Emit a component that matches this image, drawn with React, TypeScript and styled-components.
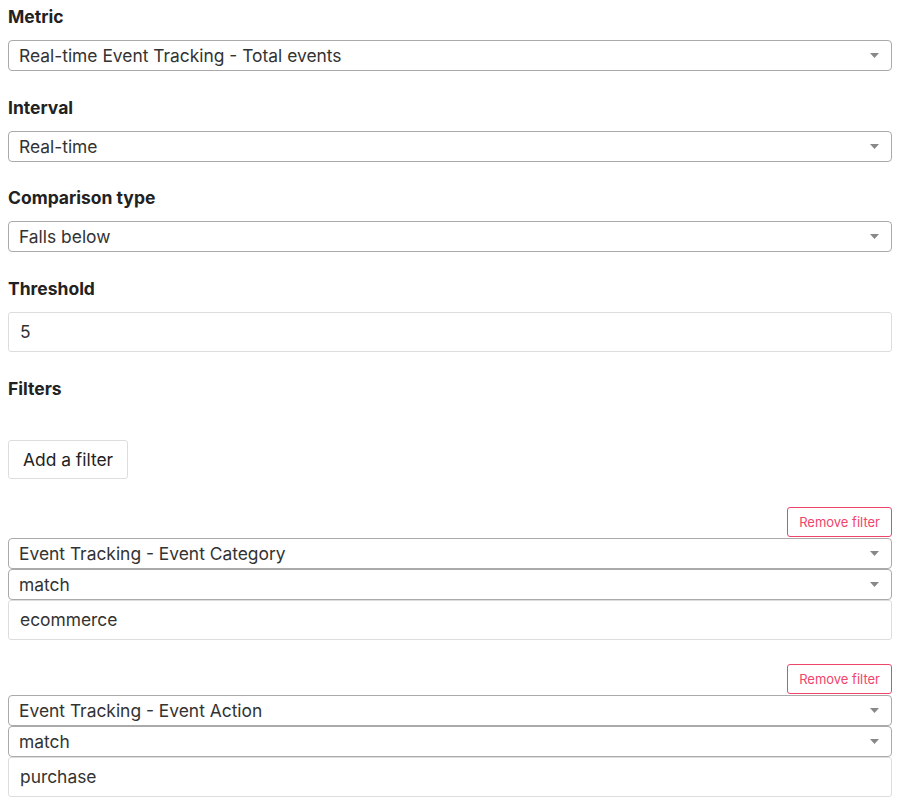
import React from 'react'
import styled, { createGlobalStyle } from 'styled-components'

const GlobalStyle = createGlobalStyle`
	body {
		margin: 8px;
		background: #fff;
		font-family: Inter, "Noto Sans", "Liberation Sans", sans-serif;
		color: #222;
	}
`

type Filter = {
	dimension: string
	operator: string
	value: string
}

const filters: Filter[] = [
	{ dimension: 'Event Tracking - Event Category', operator: 'match', value: 'ecommerce' },
	{ dimension: 'Event Tracking - Event Action', operator: 'match', value: 'purchase' },
]

const Caret = () => (
	<CaretIcon width="9" height="5" viewBox="0 0 9 5">
		<path d="M0 0h9L4.5 5z" fill="#888" />
	</CaretIcon>
)

const Select = ({ value }: { value: string }) => (
	<SelectBox>
		<span>{value}</span>
		<Caret />
	</SelectBox>
)

const App = () => {
	return (
		<>
			<GlobalStyle />
			<Form>
				<Field>
					<Label>Metric</Label>
					<Select value="Real-time Event Tracking - Total events" />
				</Field>
				<Field>
					<Label>Interval</Label>
					<Select value="Real-time" />
				</Field>
				<Field>
					<Label>Comparison type</Label>
					<Select value="Falls below" />
				</Field>
				<Field>
					<Label>Threshold</Label>
					<TextInput>5</TextInput>
				</Field>
				<Label>Filters</Label>
				<AddButton>Add a filter</AddButton>
				{filters.map((f, i) => (
					<FilterGroup key={i}>
						<RemoveRow>
							<RemoveButton>Remove filter</RemoveButton>
						</RemoveRow>
						<Select value={f.dimension} />
						<Select value={f.operator} />
						<TextInput>{f.value}</TextInput>
					</FilterGroup>
				))}
			</Form>
		</>
	)
}

const Form = styled.div`
	display: flex;
	flex-direction: column;
	width: 884px;
`

const Field = styled.div`
	display: flex;
	flex-direction: column;
	margin-bottom: 27.66px;
`

const Label = styled.div`
	font-size: 17.5px;
	font-weight: 700;
	line-height: 18px;
	margin-bottom: 14px;
	color: #222;
`

const SelectBox = styled.div`
	display: flex;
	align-items: center;
	justify-content: space-between;
	box-sizing: border-box;
	height: 31px;
	padding: 0 10px 0 10px;
	border: 1px solid #aaa;
	border-radius: 4px;
	font-size: 17.4px;
	color: #333;
	background: #fff;
`

const CaretIcon = styled.svg`
	flex-shrink: 0;
	margin-right: 2px;
`

const TextInput = styled.div`
	display: flex;
	align-items: center;
	box-sizing: border-box;
	height: 40px;
	padding: 0 11px;
	border: 1px solid #ddd;
	border-radius: 3px;
	font-size: 17.4px;
	color: #333;
`

const AddButton = styled.button`
	align-self: flex-start;
	box-sizing: border-box;
	height: 39px;
	padding: 0 14px;
	margin-top: 28px;
	border: 1px solid #ddd;
	border-radius: 3px;
	background: #fff;
	font-family: inherit;
	font-size: 17.4px;
	color: #222;
`

const FilterGroup = styled.div`
	display: flex;
	flex-direction: column;
	margin-top: 28px;

	& + & {
		margin-top: 24px;
	}
`

const RemoveRow = styled.div`
	display: flex;
	justify-content: flex-end;
	margin-bottom: 1px;
`

const RemoveButton = styled.button`
	box-sizing: border-box;
	height: 30px;
	padding: 0 11px;
	border: 1px solid #f0456b;
	border-radius: 3px;
	background: #fff;
	font-family: inherit;
	font-size: 13px;
	color: #f0456b;
`

export default App
